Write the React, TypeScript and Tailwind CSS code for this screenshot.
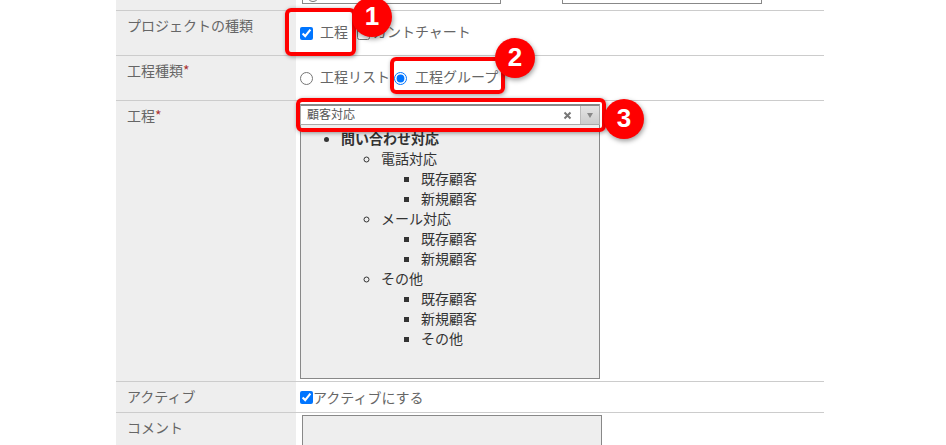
const font = { fontFamily: '"Noto Sans CJK JP", "Noto Sans", sans-serif' };

const groups = [
  { name: "電話対応", items: ["既存顧客", "新規顧客"] },
  { name: "メール対応", items: ["既存顧客", "新規顧客"] },
  { name: "その他", items: ["既存顧客", "新規顧客", "その他"] },
];

const Row = ({ label, required, children, className }: { label?: string; required?: boolean; children?: React.ReactNode; className?: string }) => (
  <div className={`flex border-b border-[#ccc] ${className ?? ""}`}>
    <div className="w-[180px] shrink-0 bg-[#eee] pl-[11px] pt-1 leading-5 text-[#666]">
      {label}
      {required && <span className="text-[#a33]">*</span>}
    </div>
    <div className="flex-1 bg-white pl-1">{children}</div>
  </div>
);

const Badge = ({ n, className }: { n: number; className: string }) => (
  <div className={`absolute flex h-10 w-10 items-center justify-center rounded-full bg-[#f00] font-['Liberation_Sans'] text-[26px] font-bold text-white shadow-[1px_2px_5px_rgba(0,0,0,0.4)] ${className}`}>
    {n}
  </div>
);

const Frame = ({ className }: { className: string }) => (
  <div className={`absolute rounded-[6px] border-4 border-[#f00] shadow-[1px_1px_4px_rgba(0,0,0,0.4)] ${className}`} />
);

export default function App() {
  return (
    <div className="relative h-[445px] w-[946px] overflow-hidden bg-white text-sm" style={font}>
      <div className="ml-[116px] w-[708px]">
        <Row className="h-[11px] overflow-hidden">
          <div className="-mt-[20px] ml-[2px] flex">
            <div className="h-[24px] w-[199px] border border-[#888]">
              <div className="ml-1 mt-[9px] h-3 w-3 rounded-full border border-[#777]" />
            </div>
            <div className="ml-[61px] h-[24px] w-[200px] border border-[#888]" />
          </div>
        </Row>
        <Row label="プロジェクトの種類" className="h-[45px]">
          <div className="flex items-center pt-[10px] leading-5 text-[#666]">
            <input type="checkbox" defaultChecked className="m-0 h-[13px] w-[13px]" />
            <span className="ml-[7px] pb-1">工程</span>
            <input type="checkbox" className="m-0 ml-[9px] h-[13px] w-[13px]" />
            <span className="ml-[3px] pb-1">ガントチャート</span>
          </div>
        </Row>
        <Row label="工程種類" required className="h-[45px]">
          <div className="flex items-center pt-[10px] leading-5 text-[#666]">
            <input type="radio" name="kind" className="m-0 h-[13px] w-[13px]" />
            <span className="ml-[7px] pb-1">工程リスト</span>
            <input type="radio" name="kind" defaultChecked className="m-0 ml-1 h-[13px] w-[13px]" />
            <span className="ml-2 pb-1">工程グループ</span>
          </div>
        </Row>
        <Row label="工程" required className="h-[281px]">
          <div className="w-[300px] pt-[3px]">
            <div className="flex h-[21px] items-center border border-t-2 border-[#aaa] border-t-[#888] bg-white text-xs text-[#555]">
              <span className="flex-1 pb-[3px] pl-[6px]">顧客対応</span>
              <svg width="9" height="9" viewBox="0 0 9 9" className="mr-2">
                <path d="M1.5 1.5l6 6M7.5 1.5l-6 6" stroke="#777" strokeWidth="2" />
              </svg>
              <div className="flex h-full w-[19px] items-center justify-center border-l border-[#bbb] bg-gradient-to-b from-[#e4e4e4] to-[#ccc]">
                <div className="h-0 w-0 border-x-[3px] border-t-[5px] border-x-transparent border-t-[#888]" />
              </div>
            </div>
            <div className="h-[254px] border border-t-0 border-[#888] bg-[#eee] pt-[3px] leading-5 text-[#333]">
              <ul className="list-disc pl-10">
                <li className="font-bold">問い合わせ対応</li>
                <ul className="list-[circle] pl-10">
                  {groups.map((g) => (
                    <li key={g.name}>
                      {g.name}
                      <ul className="list-[square] pl-10">
                        {g.items.map((item) => (
                          <li key={item}>{item}</li>
                        ))}
                      </ul>
                    </li>
                  ))}
                </ul>
              </ul>
            </div>
          </div>
        </Row>
        <Row label="アクティブ" className="h-[31px]">
          <div className="flex items-center pt-[5px] leading-5 text-[#666]">
            <input type="checkbox" defaultChecked className="m-0 h-[13px] w-[13px]" />
            <span>アクティブにする</span>
          </div>
        </Row>
        <Row label="コメント" className="h-[60px]">
          <div className="ml-[2px] mt-[2px] h-[60px] w-[300px] border border-[#888] bg-[#eee]" />
        </Row>
      </div>

      <Frame className="left-[285px] top-[8px] h-[48px] w-[71px]" />
      <Frame className="left-[390px] top-[57px] h-[37px] w-[115px]" />
      <Frame className="left-[296px] top-[98px] h-[34px] w-[310px]" />
      <Badge n={1} className="left-[352px] top-[-3px]" />
      <Badge n={2} className="left-[495px] top-[38px]" />
      <Badge n={3} className="left-[604px] top-[99px]" />
    </div>
  );
}
